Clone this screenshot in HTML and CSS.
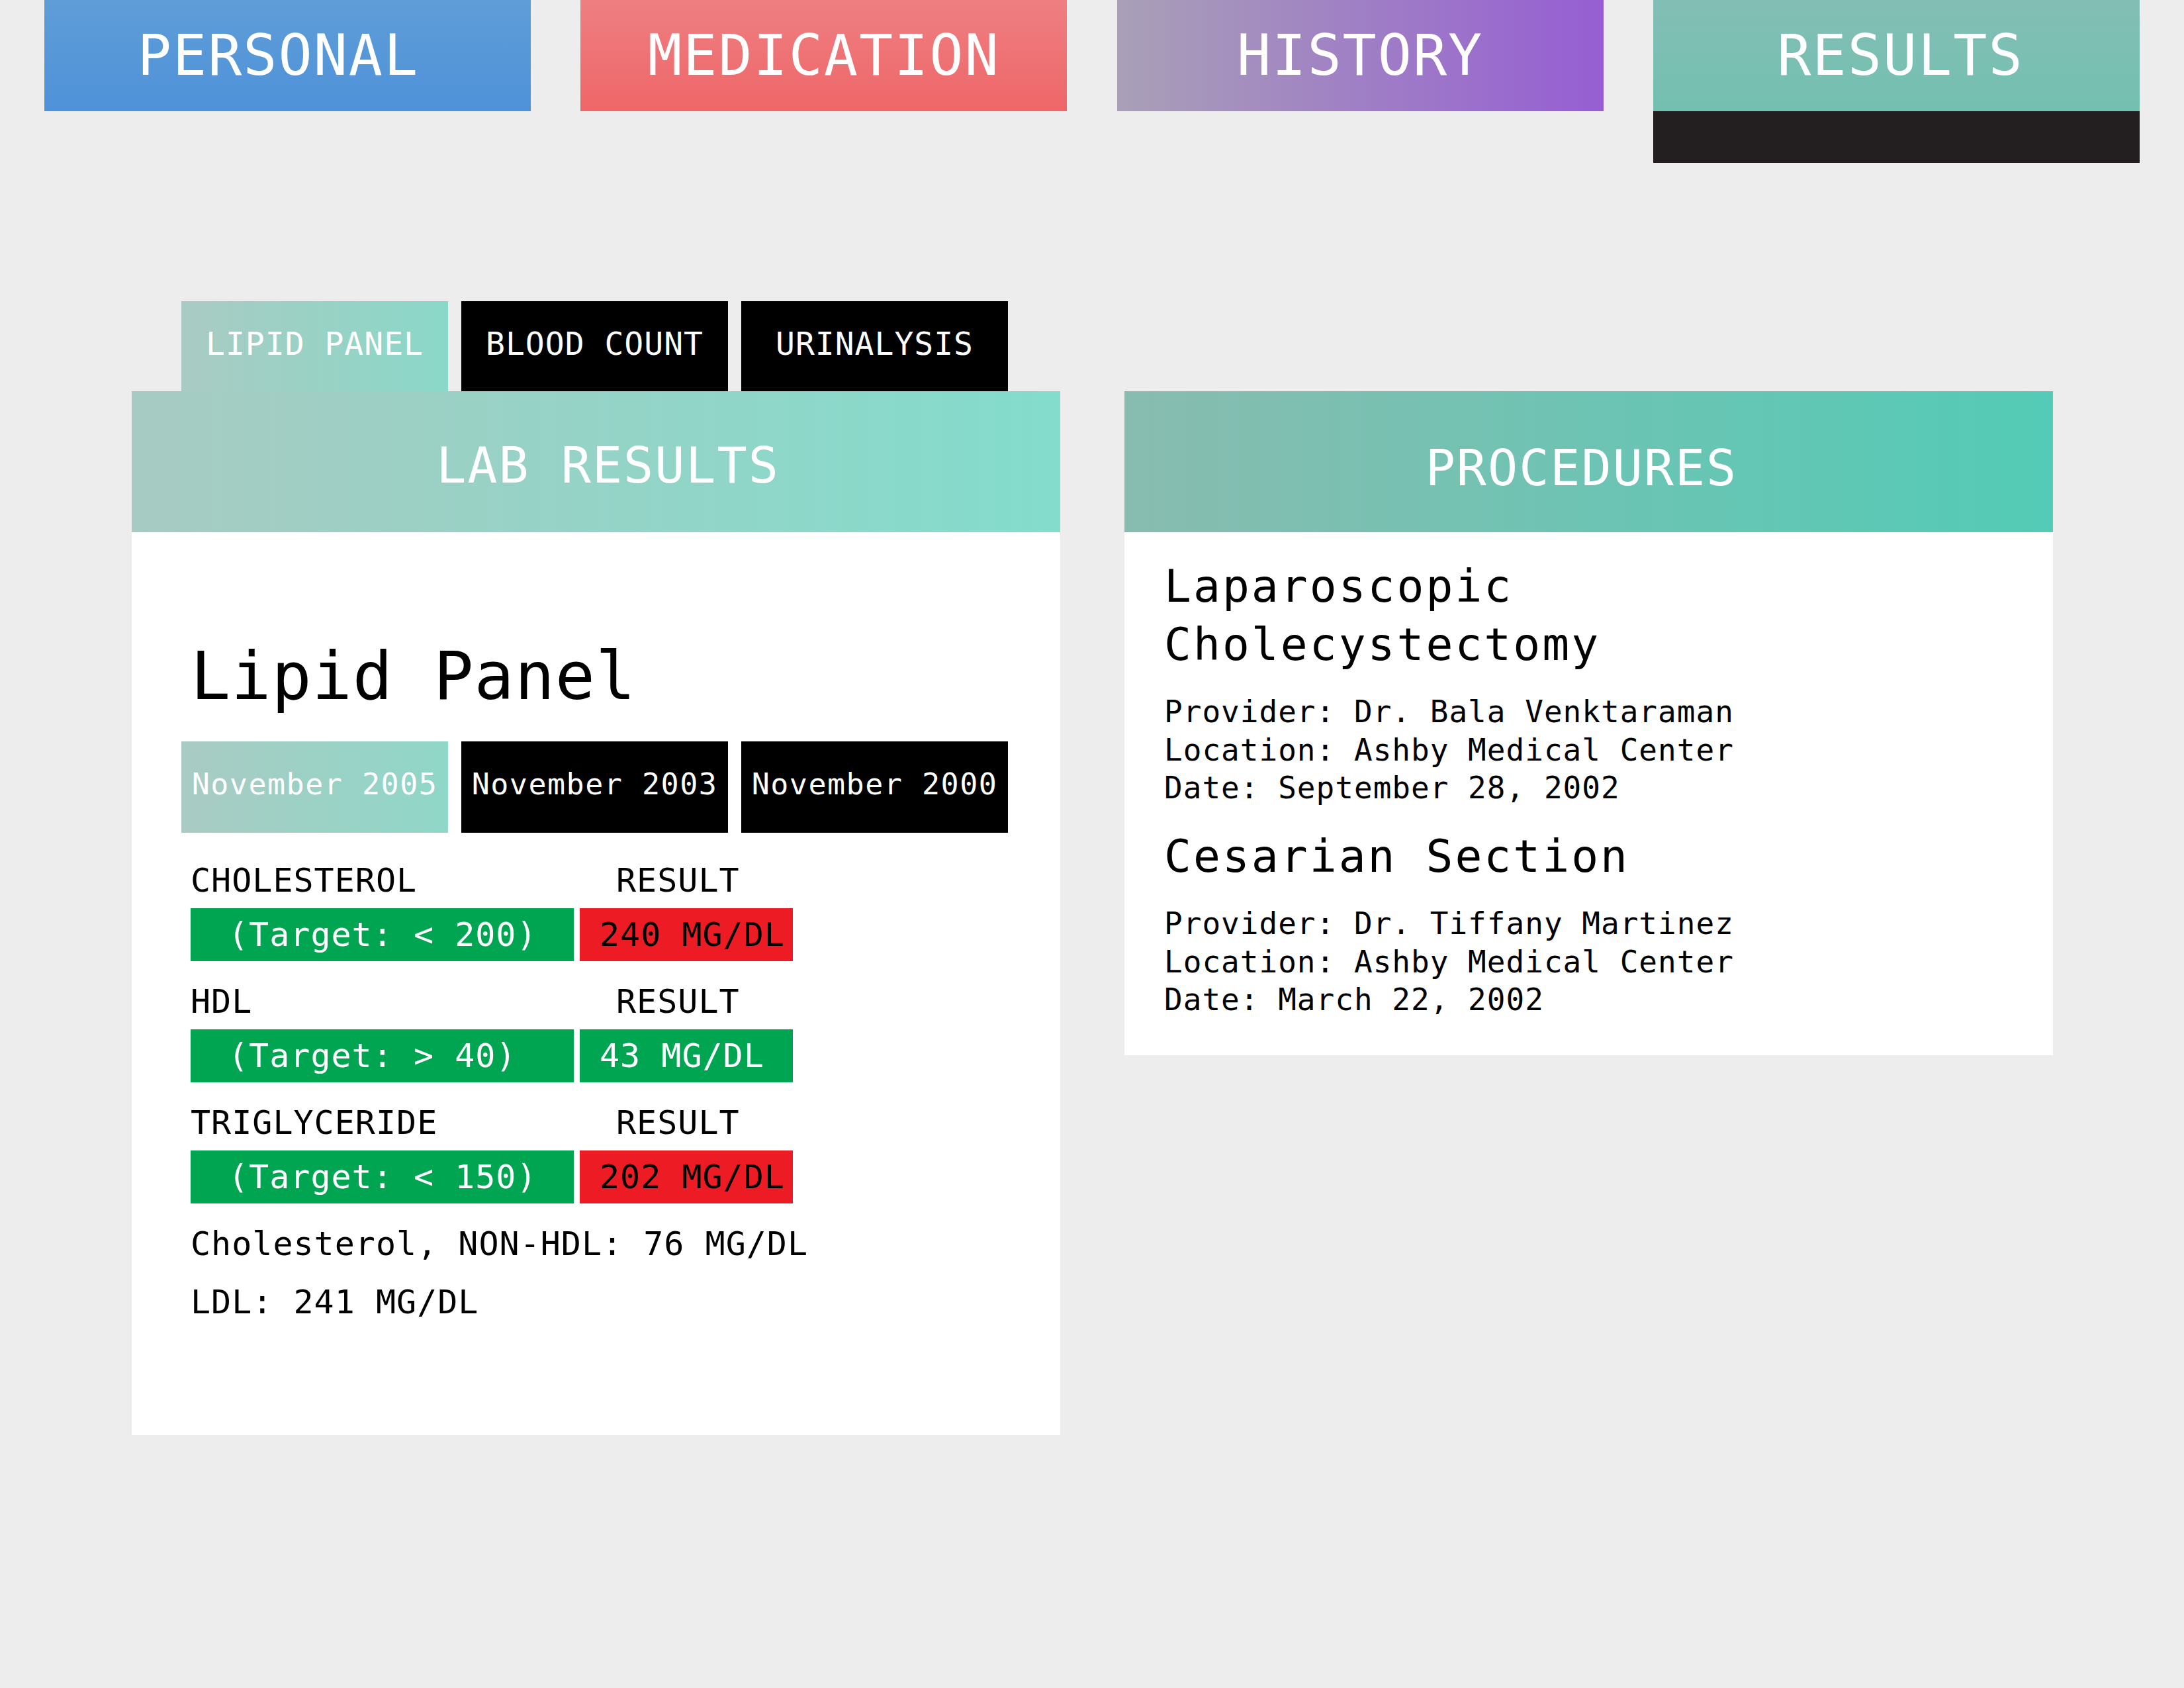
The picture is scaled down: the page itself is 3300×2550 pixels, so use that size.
FILE: index.html
```html
<!DOCTYPE html>
<html lang="en">
<head>
<meta charset="utf-8">
<title>Results</title>
<link rel="stylesheet" href="styles.css">
</head>
<body>
<nav class="topnav">
  <a class="navtab personal"><span class="navlabel">PERSONAL</span></a>
  <a class="navtab medication"><span class="navlabel">MEDICATION</span></a>
  <a class="navtab history"><span class="navlabel">HISTORY</span></a>
  <a class="navtab results active"><span class="navlabel">RESULTS</span><span class="nav-indicator"></span></a>
</nav>

<main class="content">
  <div class="subtabs">
    <a class="subtab active">LIPID PANEL</a>
    <a class="subtab">BLOOD COUNT</a>
    <a class="subtab">URINALYSIS</a>
  </div>

  <section class="panel lab">
    <header class="panel-header lab-header">LAB RESULTS</header>
    <div class="lab-body">
      <h1 class="lab-title">Lipid Panel</h1>
      <div class="datetabs">
        <a class="datetab active">November 2005</a>
        <a class="datetab">November 2003</a>
        <a class="datetab">November 2000</a>
      </div>

      <div class="result-row first">
        <div class="labels"><span class="label">CHOLESTEROL</span><span class="label result-label">RESULT</span></div>
        <div class="boxes"><span class="target">(Target: &lt; 200)</span><span class="value bad">240 MG/DL</span></div>
      </div>
      <div class="result-row">
        <div class="labels"><span class="label">HDL</span><span class="label result-label">RESULT</span></div>
        <div class="boxes"><span class="target">(Target: &gt; 40)</span><span class="value good">43 MG/DL</span></div>
      </div>
      <div class="result-row">
        <div class="labels"><span class="label">TRIGLYCERIDE</span><span class="label result-label">RESULT</span></div>
        <div class="boxes"><span class="target">(Target: &lt; 150)</span><span class="value bad">202 MG/DL</span></div>
      </div>

      <div class="summary">
        <p class="summary-line">Cholesterol, NON-HDL: 76 MG/DL</p>
        <p class="summary-line">LDL: 241 MG/DL</p>
      </div>
    </div>
  </section>

  <section class="panel proc">
    <header class="panel-header proc-header">PROCEDURES</header>
    <div class="proc-body">
      <article class="proc-item">
        <h2 class="proc-title">Laparoscopic Cholecystectomy</h2>
        <p class="proc-line">Provider: Dr. Bala Venktaraman</p>
        <p class="proc-line">Location: Ashby Medical Center</p>
        <p class="proc-line">Date: September 28, 2002</p>
      </article>
      <article class="proc-item">
        <h2 class="proc-title">Cesarian Section</h2>
        <p class="proc-line">Provider: Dr. Tiffany Martinez</p>
        <p class="proc-line">Location: Ashby Medical Center</p>
        <p class="proc-line">Date: March 22, 2002</p>
      </article>
    </div>
  </section>
</main>
</body>
</html>
```

FILE: styles.css
```css
* { box-sizing: border-box; }

body {
  margin: 0;
  background: #ededed;
  font-family: "DejaVu Sans Mono", "Liberation Mono", monospace;
  color: #000;
}

a { text-decoration: none; color: inherit; }

/* ---------- top navigation ---------- */
.topnav {
  display: flex;
  justify-content: space-between;
  align-items: flex-start;
  padding: 0 67px;
}

.navtab {
  width: 735px;
  display: flex;
  flex-direction: column;
}

.navlabel {
  display: block;
  height: 168px;
  line-height: 168px;
  text-align: center;
  color: #fff;
  font-size: 85px;
  letter-spacing: 2px;
}

.personal .navlabel { background: linear-gradient(#5f9dd8, #4e92d8); padding-right: 28px; }
.medication .navlabel { background: linear-gradient(#ee7f82, #ef6668); }
.history .navlabel { background: linear-gradient(90deg, #a9a0b7, #965ed3); }
.results .navlabel { background: linear-gradient(#83beb5, #73c0b0); padding-left: 12px; }

.nav-indicator {
  display: block;
  height: 78px;
  background: #231f20;
}

/* ---------- main grid ---------- */
.content {
  display: grid;
  grid-template-columns: 1403px 1403px;
  column-gap: 97px;
  padding: 209px 198px 0 199px;
  align-items: start;
}

.subtabs {
  grid-column: 1;
  grid-row: 1;
  display: flex;
  gap: 20px;
  margin-left: 75px;
}

.subtab {
  flex: 0 0 403px;
  height: 136px;
  line-height: 128px;
  text-align: center;
  font-size: 48px;
  letter-spacing: 1px;
  color: #fff;
  background: #000;
}

.subtab.active { background: linear-gradient(90deg, #a9cbc3, #8ad8c8); }

.panel { background: #fff; }
.lab { grid-column: 1; grid-row: 2; }
.proc { grid-column: 2; grid-row: 2; }

.panel-header {
  height: 213px;
  padding-top: 47px;
  line-height: 130px;
  text-align: center;
  color: #fff;
  font-size: 75px;
  letter-spacing: 2px;
}

.lab-header {
  background: linear-gradient(90deg, #a7cbc2, #83dccc);
  padding-left: 36px;
}

.proc-header {
  background: linear-gradient(90deg, #88bcb0, #53cbb6);
  padding-top: 51px;
  padding-right: 22px;
}

/* ---------- lab results ---------- */
.lab-body {
  padding: 158px 89px 157px;
}

.lab-title {
  margin: 0 0 38px;
  font-weight: normal;
  font-size: 100px;
  line-height: 120px;
  letter-spacing: 1px;
}

.datetabs {
  display: flex;
  gap: 20px;
  margin-left: -14px;
}

.datetab {
  flex: 0 0 403px;
  height: 138px;
  line-height: 130px;
  text-align: center;
  font-size: 45px;
  letter-spacing: 1.5px;
  color: #fff;
  background: #000;
  white-space: nowrap;
}

.datetab.active { background: linear-gradient(90deg, #a9cbc3, #8fd7c8); }

.result-row { margin-top: 31px; }
.result-row.first { margin-top: 42px; }

.labels,
.boxes {
  display: grid;
  grid-template-columns: 579px 322px;
  column-gap: 9px;
}

.label {
  font-size: 50px;
  line-height: 60px;
  letter-spacing: 1px;
}

.result-label { padding-left: 55px; }

.boxes { margin-top: 12px; }

.target,
.value {
  height: 80px;
  line-height: 80px;
  font-size: 50px;
  letter-spacing: 1px;
  white-space: nowrap;
}

.target {
  background: #00a551;
  color: #fff;
  padding-left: 57px;
}

.value { padding-left: 30px; }
.value.bad { background: #ed1c24; color: #000; }
.value.good { background: #00a551; color: #fff; }

.summary { margin-top: 17px; }

.summary-line {
  margin: 0;
  font-size: 50px;
  line-height: 88px;
  letter-spacing: 1px;
}

/* ---------- procedures ---------- */
.proc-body {
  padding: 38px 60px 54px;
}

.proc-item + .proc-item { margin-top: 30px; }

.proc-title {
  margin: 0 0 30px;
  max-width: 800px;
  font-weight: normal;
  font-size: 68px;
  line-height: 87.5px;
  letter-spacing: 3px;
}

.proc-line {
  margin: 0;
  font-size: 46px;
  line-height: 57.5px;
  letter-spacing: 1px;
  white-space: nowrap;
}
```
